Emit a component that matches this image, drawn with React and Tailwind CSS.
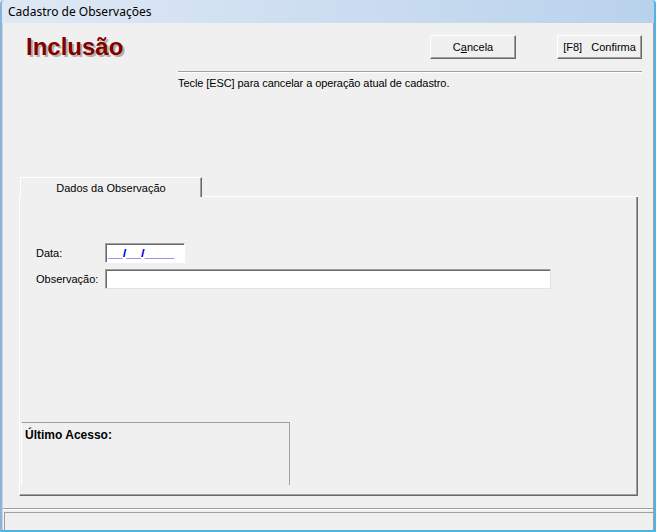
import React from "react";

const ui = { fontFamily: '"Liberation Sans", Arial, sans-serif' };

function Btn({ children }) {
  return (
    <div
      className="h-[24px] flex items-center justify-center text-[11px] text-black bg-[#f0f0f0] border border-t-white border-l-white border-r-[#696969] border-b-[#696969] shadow-[inset_-1px_-1px_0_#a0a0a0]"
      style={ui}
    >
      {children}
    </div>
  );
}

export default function App() {
  return (
    <div className="w-[656px] h-[532px] flex flex-col bg-[#f0f0f0] overflow-hidden">
      {/* title bar */}
      <div className="h-[23px] shrink-0 flex items-center pl-[6px] bg-gradient-to-r from-[#dfe9f5] to-[#b9d2ec] border-l-2 border-l-[#8cb4da] border-r-2 border-r-[#4fb3e4] rounded-tl-[4px] rounded-tr-[4px]">
        <span className="text-[12px] text-black leading-none" style={{ fontFamily: '"Noto Sans", "Open Sans", sans-serif' }}>
          Cadastro de Observações
        </span>
      </div>
      {/* body */}
      <div className="flex-1 flex flex-col border-l-2 border-l-[#8cb4da] border-r-2 border-r-[#4fb3e4] border-b-2 border-b-[#4fb3e4]">
        <div className="flex-1 flex flex-col border-r border-r-[#a0a0a0] border-l border-l-[#c8d4e0]" style={ui}>
          {/* header row */}
          <div className="flex items-start justify-between mt-[12px] pl-[23px] pr-[11px]">
            <div
              className="text-[24px] font-bold leading-[26px] text-[#800000] -mt-[1px]"
              style={{ fontFamily: '"Liberation Sans", Arial, sans-serif', textShadow: "2px 2px 0 #b8b0a8" }}
            >
              Inclusão
            </div>
            <div className="flex gap-[41px]">
              <div className="w-[86px]">
                <Btn>
                  C<span className="underline">a</span>ncela
                </Btn>
              </div>
              <div className="w-[85px]">
                <Btn>[F8]&nbsp;&nbsp; Confirma</Btn>
              </div>
            </div>
          </div>
          <div className="ml-[175px] mr-[11px] mt-[11px] h-[2px] border-t border-t-[#a0a0a0] border-b border-b-white" />
          <div className="ml-[175px] mt-[4px] text-[11px] leading-[13px] text-black tracking-[-0.08px]">
            Tecle [ESC] para cancelar a operação atual de cadastro.
          </div>

          {/* tab control */}
          <div className="ml-[16px] w-[619px] mt-[87px] flex flex-col">
            <div className="h-[20px] flex items-stretch">
              <div className="w-[1px]" />
              <div className="w-[182px] border-t border-l border-t-white border-l-white border-r border-r-[#696969] shadow-[inset_-1px_0_0_#a0a0a0] flex items-start justify-center pt-[2px] text-[11px] text-black">
                Dados da Observação
              </div>
              <div className="flex-1 flex items-end">
                <div className="w-full h-[1px] bg-white" />
              </div>
            </div>
            <div className="h-[299px] border-l border-l-white border-r border-r-[#696969] border-b border-b-[#696969] shadow-[inset_-1px_-1px_0_#a0a0a0] flex flex-col pl-[16px]">
              <div className="mt-[46px] flex items-center">
                <div className="w-[69px] text-[11px] text-black">Data:</div>
                <div className="w-[80px] h-[20px] bg-white border border-t-[#a0a0a0] border-l-[#a0a0a0] border-r-white border-b-white shadow-[inset_1px_1px_0_#696969] flex items-center pl-[2px] text-[11px] text-[#0000e0] font-bold">
                  <span className="inline-block origin-left scale-x-[1.2]">__/__/____</span>
                </div>
              </div>
              <div className="mt-[6px] flex items-center">
                <div className="w-[69px] text-[11px] text-black">Observação:</div>
                <div className="w-[446px] h-[20px] bg-white border border-t-[#a0a0a0] border-l-[#a0a0a0] border-r-[#e3e3e3] border-b-[#e3e3e3] shadow-[inset_1px_1px_0_#696969]" />
              </div>
              <div className="mt-[133px] -ml-[15px] w-[269px] h-[63px] border-t border-t-[#a0a0a0] border-r border-r-[#a0a0a0] border-l border-l-white pl-[3px] pt-[5px]">
                <div className="text-[12px] font-bold text-black leading-[14px]">Último Acesso:</div>
              </div>
            </div>
          </div>

          {/* bottom separator & status bar */}
          <div className="mt-[12px] h-[2px] border-t border-t-[#a0a0a0] border-b border-b-white" />
          <div className="mt-[2px] ml-[1px] flex-1 border-t border-t-[#a0a0a0] border-l border-l-[#a0a0a0]" />
        </div>
      </div>
    </div>
  );
}
